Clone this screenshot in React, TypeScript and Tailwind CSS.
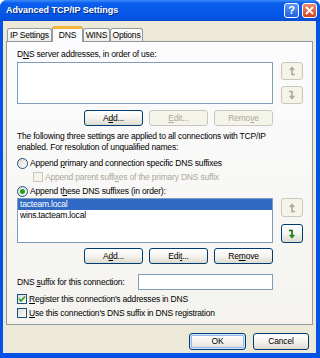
import React from 'react';

const BTN_ON = 'border-[#003c74] text-black bg-linear-to-b from-white via-[#f4f3ee] to-[#dedbcf]';
const BTN_OFF = 'border-[#c9c7ba] text-[#aca899] bg-[#f5f4ea]';

function U({ children }: { children: React.ReactNode }) {
  return <span className="underline underline-offset-[1px]">{children}</span>;
}

function PushButton({
  children,
  disabled,
  className = 'h-[16px]',
}: {
  children: React.ReactNode;
  disabled?: boolean;
  className?: string;
}) {
  return (
    <div className={`flex items-center justify-center rounded-[3px] border ${disabled ? BTN_OFF : BTN_ON} ${className}`}>
      {children}
    </div>
  );
}

// little bent arrow used by the move up / move down buttons
function MoveArrow({ down, active }: { down?: boolean; active?: boolean }) {
  const fill = active ? '#21a121' : '#aca899';
  const stroke = active ? '#0e6e0e' : '#aca899';
  return (
    <svg width="8" height="10" viewBox="0 0 8 10">
      {down ? (
        <>
          <path d="M1 1.5 H4 V7" fill="none" stroke={stroke} strokeWidth="1.6" />
          <path d="M1.5 6.2 L4 9.3 L6.5 6.2 Z" fill={fill} stroke={stroke} strokeWidth="0.6" />
        </>
      ) : (
        <>
          <path d="M4 3 V8.5 H7" fill="none" stroke={stroke} strokeWidth="1.6" />
          <path d="M1.5 3.8 L4 0.7 L6.5 3.8 Z" fill={fill} stroke={stroke} strokeWidth="0.6" />
        </>
      )}
    </svg>
  );
}

function MoveButtons({ downActive, tall }: { downActive?: boolean; tall?: boolean }) {
  const h = tall ? 'h-[19px]' : 'h-[18px]';
  return (
    <div className="flex flex-col justify-between w-[22px]">
      <div className={`${h} rounded-[3px] border ${BTN_OFF} flex items-center justify-center`}>
        <MoveArrow />
      </div>
      <div className={`${h} rounded-[3px] border ${downActive ? BTN_ON : BTN_OFF} flex items-center justify-center`}>
        <MoveArrow down active={downActive} />
      </div>
    </div>
  );
}

function Radio({ checked, children }: { checked?: boolean; children: React.ReactNode }) {
  return (
    <div className="h-[12px] flex items-center gap-[2px]">
      <span className="w-[11px] h-[11px] rounded-full border border-[#1c5180] bg-linear-to-br from-[#dcdad0] to-white flex items-center justify-center">
        {checked && <span className="w-[5px] h-[5px] rounded-full bg-[#21a121]" />}
      </span>
      <span>{children}</span>
    </div>
  );
}

function Check({
  checked,
  disabled,
  children,
}: {
  checked?: boolean;
  disabled?: boolean;
  children: React.ReactNode;
}) {
  return (
    <div className={`h-[12px] flex items-center gap-[2px] ${disabled ? 'text-[#aca899]' : ''}`}>
      <span
        className={`w-[10px] h-[10px] border flex items-center justify-center ${
          disabled ? 'border-[#cac8bb] bg-[#f5f4ea]' : 'border-[#1c5180] bg-linear-to-br from-[#dcdad0] to-white'
        }`}
      >
        {checked && (
          <svg width="8" height="8" viewBox="0 0 8 8">
            <path d="M1 3.8 L3 6 L7 1.5" fill="none" stroke="#21a121" strokeWidth="1.7" />
          </svg>
        )}
      </span>
      <span>{children}</span>
    </div>
  );
}

function Tab({ label, active, w }: { label: string; active?: boolean; w: string }) {
  if (active) {
    return (
      <div
        className={`${w} h-[16px] -mb-px relative z-10 rounded-t-[3px] border border-[#919b9c] border-b-0 border-t-[3px] border-t-[#f6b43a] bg-[#fcfcfe] flex items-center justify-center`}
      >
        {label}
      </div>
    );
  }
  return (
    <div
      className={`${w} h-[13px] rounded-t-[3px] border border-[#919b9c] border-b-0 bg-linear-to-b from-white to-[#ecebe6] flex items-center justify-center`}
    >
      {label}
    </div>
  );
}

export default function App() {
  return (
    <div className="w-[320px] h-[358px] flex flex-col rounded-t-[7px] overflow-hidden bg-[#0553e4] font-['Liberation_Sans',Arial,sans-serif] text-[8.5px] leading-[11px] tracking-[-0.2px] text-black">
      {/* Title bar */}
      <div className="h-[21px] shrink-0 flex items-center pl-[6px] pr-[3px] bg-[linear-gradient(to_bottom,#3d8df7_0%,#0a5fee_15%,#0558ea_60%,#0551dd_90%,#0447cf_100%)]">
        <span className="flex-1 text-white font-bold text-[9px] tracking-normal [text-shadow:1px_1px_0_#0a2a80]">
          Advanced TCP/IP Settings
        </span>
        <div className="flex items-center gap-[3px]">
          <div className="w-[15px] h-[15px] rounded-[3px] border border-white bg-linear-to-b from-[#5a9af8] to-[#1e5fd9] flex items-center justify-center text-white font-bold text-[11px] tracking-normal">
            ?
          </div>
          <div className="w-[15px] h-[15px] rounded-[3px] border border-white bg-linear-to-b from-[#ef8c6c] to-[#d0421e] flex items-center justify-center">
            <svg width="9" height="9" viewBox="0 0 9 9">
              <path d="M1 1 L8 8 M8 1 L1 8" stroke="white" strokeWidth="1.8" />
            </svg>
          </div>
        </div>
      </div>

      {/* Dialog body */}
      <div className="flex-1 ml-[3px] mr-[4px] mb-[5px] bg-[#ece9d8] flex flex-col pt-[5px] px-[3px]">
        {/* Tabs */}
        <div className="h-[15px] flex items-end pl-[1px]">
          <Tab label="IP Settings" w="w-[45px]" />
          <Tab label="DNS" w="w-[31px]" active />
          <Tab label="WINS" w="w-[27px]" />
          <Tab label="Options" w="w-[33px]" />
        </div>

        {/* Tab page */}
        <div className="h-[284px] border border-[#919b9c] bg-linear-to-b from-[#fcfcfe] to-[#f4f3ee] pl-[10px] pt-[7px]">
          <div className="h-[11px]">
            D<U>N</U>S server addresses, in order of use:
          </div>

          <div className="mt-[2px] flex gap-[8px]">
            <div className="w-[256px] h-[42px] border border-[#7f9db9] bg-white" />
            <MoveButtons />
          </div>

          <div className="mt-[6px] w-[256px] flex justify-end gap-[6px]">
            <PushButton className="w-[59px] h-[16px]">
              A<U>d</U>d...
            </PushButton>
            <PushButton className="w-[59px] h-[16px]" disabled>
              <U>E</U>dit...
            </PushButton>
            <PushButton className="w-[59px] h-[16px]" disabled>
              Remo<U>v</U>e
            </PushButton>
          </div>

          <p className="mt-[5px]">
            The following three settings are applied to all connections with TCP/IP
            <br />
            enabled. For resolution of unqualified names:
          </p>

          <div className="mt-[4px]">
            <Radio>
              Append <U>p</U>rimary and connection specific DNS suffixes
            </Radio>
          </div>
          <div className="mt-[2px] pl-[16px]">
            <Check disabled>
              Append parent suffi<U>x</U>es of the primary DNS suffix
            </Check>
          </div>
          <div className="mt-[2px]">
            <Radio checked>
              Append t<U>h</U>ese DNS suffixes (in order):
            </Radio>
          </div>

          <div className="mt-[1px] flex gap-[8px]">
            <div className="w-[256px] h-[45px] border border-[#7f9db9] bg-white">
              <div className="h-[11px] bg-[#316ac5] text-white pl-[2px]">tacteam.local</div>
              <div className="h-[11px] pl-[2px]">wins.tacteam.local</div>
            </div>
            <MoveButtons downActive tall />
          </div>

          <div className="mt-[5px] w-[256px] flex justify-end gap-[6px]">
            <PushButton className="w-[59px] h-[16px]">
              A<U>d</U>d...
            </PushButton>
            <PushButton className="w-[59px] h-[16px]">
              Edi<U>t</U>...
            </PushButton>
            <PushButton className="w-[59px] h-[16px]">
              Re<U>m</U>ove
            </PushButton>
          </div>

          <div className="mt-[10px] w-[256px] flex items-center justify-between">
            <span>
              DNS <U>s</U>uffix for this connection:
            </span>
            <div className="w-[135px] h-[16px] border border-[#7f9db9] bg-white" />
          </div>

          <div className="mt-[3px]">
            <Check checked>
              <U>R</U>egister this connection's addresses in DNS
            </Check>
          </div>
          <div className="mt-[2px]">
            <Check>
              <U>U</U>se this connection's DNS suffix in DNS registration
            </Check>
          </div>
        </div>

        {/* OK / Cancel */}
        <div className="mt-[8px] flex justify-end gap-[7px] pr-[4px]">
          <PushButton className="w-[57px] h-[17px] shadow-[inset_0_0_0_1px_#cee7ff,inset_0_0_0_2px_#98b8ea]">
            OK
          </PushButton>
          <PushButton className="w-[56px] h-[17px]">Cancel</PushButton>
        </div>
      </div>
    </div>
  );
}
